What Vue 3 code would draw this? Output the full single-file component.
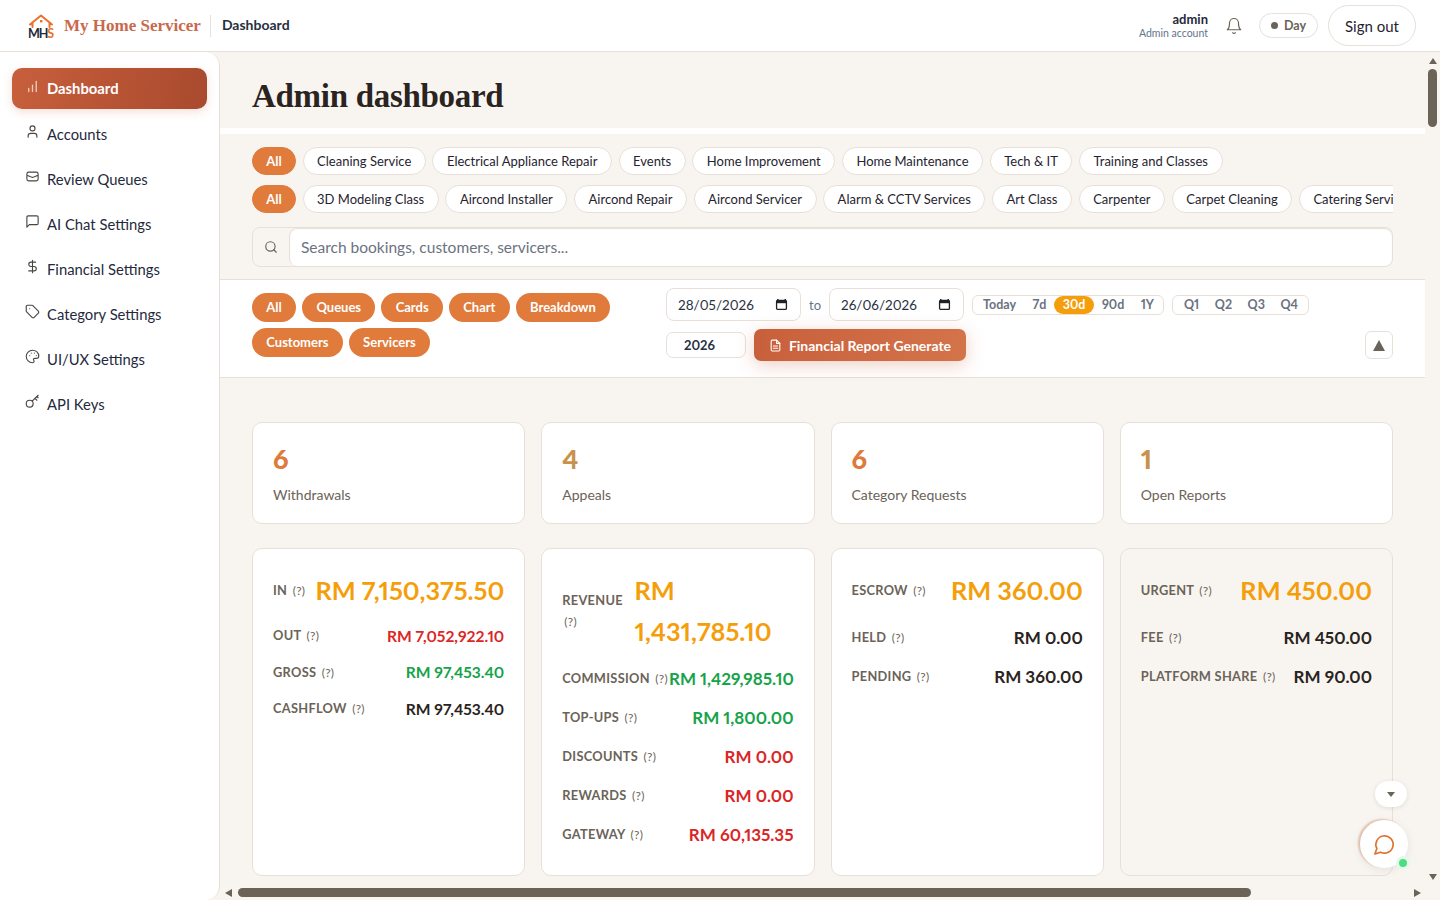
<template>
  <div class="app">
    <header class="topbar">
      <div class="brand">
        <svg class="logo" viewBox="0 0 28 28" width="28" height="28">
          <path d="M3 12.500 14 3.500 25 12.500M5.500 11v4M22.500 11v4" fill="none" stroke="#e8722c" stroke-width="2" stroke-linecap="round" stroke-linejoin="round" />
          <rect x="13" y="8" width="2.400" height="2.400" fill="#e8722c" />
          <text x="1" y="25.500" font-size="12.500" font-weight="700" font-family="Lato, sans-serif" textLength="26" fill="#1f2a3d">MH<tspan fill="#e8722c">S</tspan></text>
        </svg>
        <span class="brand-name">My Home Servicer</span>
      </div>
      <span class="crumb">Dashboard</span>
      <div class="top-right">
        <div class="who">
          <strong>admin</strong>
          <span>Admin account</span>
        </div>
        <svg class="bell" viewBox="0 0 24 24" width="18" height="18" fill="none" stroke="#6b6358" stroke-width="1.600" stroke-linecap="round" stroke-linejoin="round">
          <path d="M6 8a6 6 0 0 1 12 0c0 7 3 9 3 9H3s3-2 3-9" />
          <path d="M10.300 21a2 2 0 0 0 3.400 0" />
        </svg>
        <div class="day"><i></i>Day</div>
        <button class="signout">Sign out</button>
      </div>
    </header>

    <div class="body">
      <aside class="sidebar">
        <a v-for="item in nav" :key="item.label" :class="['nav-item', { active: item.active }]">
          <svg viewBox="0 0 24 24" width="15" height="15" fill="none" stroke="currentColor" stroke-width="1.800" stroke-linecap="round" stroke-linejoin="round">
            <path :d="item.icon" />
          </svg>
          <span>{{ item.label }}</span>
        </a>
      </aside>

      <div class="main-wrap">
        <main class="main">
          <section class="title-row">
            <h1>Admin dashboard</h1>
          </section>

          <section class="filters">
            <div class="chip-row">
              <span class="chip on">All</span>
              <span v-for="c in categories" :key="c" class="chip">{{ c }}</span>
            </div>
            <div class="chip-row">
              <span class="chip on">All</span>
              <span v-for="c in services" :key="c" class="chip">{{ c }}</span>
            </div>
            <div class="search">
              <div class="search-icon">
                <svg viewBox="0 0 24 24" width="14" height="14" fill="none" stroke="#6b6358" stroke-width="2" stroke-linecap="round">
                  <circle cx="11" cy="11" r="8" />
                  <path d="m21 21-4.300-4.300" />
                </svg>
              </div>
              <div class="search-input">Search bookings, customers, servicers...</div>
            </div>
          </section>

          <section class="toolbar">
            <div class="section-pills">
              <span v-for="p in sections" :key="p" class="pill">{{ p }}</span>
            </div>
            <div class="tools">
              <div class="tools-line">
                <div class="date">28/05/2026<svg viewBox="0 0 14 14" width="13" height="13"><path d="M3 1v2M11 1v2" stroke="#222" stroke-width="1.500" /><rect x="1.700" y="2.700" width="10.600" height="9.600" rx="1" fill="none" stroke="#222" stroke-width="1.400" /><rect x="1.700" y="3" width="10.600" height="2.600" fill="#222" /></svg></div>
                <span class="to">to</span>
                <div class="date">26/06/2026<svg viewBox="0 0 14 14" width="13" height="13"><path d="M3 1v2M11 1v2" stroke="#222" stroke-width="1.500" /><rect x="1.700" y="2.700" width="10.600" height="9.600" rx="1" fill="none" stroke="#222" stroke-width="1.400" /><rect x="1.700" y="3" width="10.600" height="2.600" fill="#222" /></svg></div>
                <div class="seg">
                  <span v-for="r in ranges" :key="r" :class="{ on: r === '30d' }">{{ r }}</span>
                </div>
                <div class="seg quarters">
                  <span v-for="q in quarters" :key="q">{{ q }}</span>
                </div>
              </div>
              <div class="tools-line second">
                <div class="year">2026</div>
                <button class="report">
                  <svg viewBox="0 0 24 24" width="13" height="13" fill="none" stroke="currentColor" stroke-width="2" stroke-linecap="round" stroke-linejoin="round">
                    <path d="M14 2H6a2 2 0 0 0-2 2v16a2 2 0 0 0 2 2h12a2 2 0 0 0 2-2V8z" />
                    <path d="M14 2v6h6M8 13h8M8 17h8" />
                  </svg>
                  Financial Report Generate
                </button>
                <button class="collapse"><i></i></button>
              </div>
            </div>
          </section>

          <section class="content">
            <div class="grid counts">
              <div v-for="c in counts" :key="c.label" class="card count">
                <b :style="{ color: c.color }">{{ c.value }}</b>
                <span>{{ c.label }}</span>
              </div>
            </div>
            <div class="grid stats">
              <div v-for="(card, i) in stats" :key="i" :class="['card', 'stat', card.kind]">
                <div v-for="(row, j) in card.rows" :key="row.label" :class="['stat-row', { lead: j === 0 }]">
                  <div class="stat-label">{{ row.label }} <small>(?)</small></div>
                  <div :class="['stat-value', row.tone]">{{ row.value }}</div>
                </div>
              </div>
            </div>
          </section>
        </main>

        <!-- headless chrome drops real scrollbars, so these are drawn over the pane -->
        <div class="bar-v">
          <i class="arrow up"></i>
          <b class="thumb-v"></b>
          <i class="arrow down"></i>
        </div>
        <div class="bar-h">
          <i class="arrow left"></i>
          <b class="thumb-h"></b>
          <i class="arrow right"></i>
        </div>
      </div>
    </div>

    <button class="float-down"><i></i></button>
    <button class="chat">
      <svg viewBox="0 0 24 24" width="23" height="23" fill="none" stroke="#e0702c" stroke-width="1.700" stroke-linejoin="round">
        <path d="M7.900 20A9 9 0 1 0 4 16.100L2 22z" />
      </svg>
      <em></em>
    </button>
  </div>
</template>

<script setup>
const nav = [
  { label: 'Dashboard', active: true, icon: 'M6 20v-5M12 20V10M18 20V4' },
  { label: 'Accounts', icon: 'M19 21v-2a4 4 0 0 0-4-4H9a4 4 0 0 0-4 4v2M12 11a4 4 0 1 0 0-8 4 4 0 0 0 0 8z' },
  { label: 'Review Queues', icon: 'M3 12V8a3 3 0 0 1 3-3h12a3 3 0 0 1 3 3v8a3 3 0 0 1-3 3H6a3 3 0 0 1-3-3zM3 10l6 2.500 3 1 3-1 6-2.500' },
  { label: 'AI Chat Settings', icon: 'M21 15a2 2 0 0 1-2 2H7l-4 4V5a2 2 0 0 1 2-2h14a2 2 0 0 1 2 2z' },
  { label: 'Financial Settings', icon: 'M12 2v20M17 5H9.500a3.500 3.500 0 0 0 0 7h5a3.500 3.500 0 0 1 0 7H6' },
  { label: 'Category Settings', icon: 'M12.600 2.600A2 2 0 0 0 11.200 2H4a2 2 0 0 0-2 2v7.200a2 2 0 0 0 .6 1.400l8.700 8.700a2.400 2.400 0 0 0 3.400 0l6.600-6.600a2.400 2.400 0 0 0 0-3.400zM7.500 7.500h.01' },
  { label: 'UI/UX Settings', icon: 'M12 2a10 10 0 1 0 0 20c1.500 0 2.500-1 2.500-2.300 0-1.500-1-1.700-1-3 0-1 .8-1.700 2-1.700h2.500c2.200 0 4-1.500 4-4C22 5.800 17.500 2 12 2zM7.500 10.500h.01M10 6.500h.01M15 6.500h.01M18 10.500h.01' },
  { label: 'API Keys', icon: 'M7.500 21a5.500 5.500 0 1 0 0-11 5.500 5.500 0 0 0 0 11zM11.500 11.500 21 2M16 7l3 3M19 4l2 2' }
]

const categories = ['Cleaning Service', 'Electrical Appliance Repair', 'Events', 'Home Improvement', 'Home Maintenance', 'Tech & IT', 'Training and Classes']
const services = ['3D Modeling Class', 'Aircond Installer', 'Aircond Repair', 'Aircond Servicer', 'Alarm & CCTV Services', 'Art Class', 'Carpenter', 'Carpet Cleaning', 'Catering Services']
const sections = ['All', 'Queues', 'Cards', 'Chart', 'Breakdown', 'Customers', 'Servicers']
const ranges = ['Today', '7d', '30d', '90d', '1Y']
const quarters = ['Q1', 'Q2', 'Q3', 'Q4']

const counts = [
  { value: 6, label: 'Withdrawals', color: '#dd7a3c' },
  { value: 4, label: 'Appeals', color: '#c9924a' },
  { value: 6, label: 'Category Requests', color: '#dd7a3c' },
  { value: 1, label: 'Open Reports', color: '#c9924a' }
]

const stats = [
  {
    kind: 'compact',
    rows: [
      { label: 'IN', value: 'RM 7,150,375.50', tone: 'orange' },
      { label: 'OUT', value: 'RM 7,052,922.10', tone: 'red' },
      { label: 'GROSS', value: 'RM 97,453.40', tone: 'green' },
      { label: 'CASHFLOW', value: 'RM 97,453.40' }
    ]
  },
  {
    kind: '',
    rows: [
      { label: 'REVENUE', value: 'RM 1,431,785.10', tone: 'orange' },
      { label: 'COMMISSION', value: 'RM 1,429,985.10', tone: 'green' },
      { label: 'TOP-UPS', value: 'RM 1,800.00', tone: 'green' },
      { label: 'DISCOUNTS', value: 'RM 0.00', tone: 'red' },
      { label: 'REWARDS', value: 'RM 0.00', tone: 'red' },
      { label: 'GATEWAY', value: 'RM 60,135.35', tone: 'red' }
    ]
  },
  {
    kind: '',
    rows: [
      { label: 'ESCROW', value: 'RM 360.00', tone: 'orange' },
      { label: 'HELD', value: 'RM 0.00' },
      { label: 'PENDING', value: 'RM 360.00' }
    ]
  },
  {
    kind: 'tinted',
    rows: [
      { label: 'URGENT', value: 'RM 450.00', tone: 'orange' },
      { label: 'FEE', value: 'RM 450.00' },
      { label: 'PLATFORM SHARE', value: 'RM 90.00' }
    ]
  }
]
</script>

<style>
html, body {
  margin: 0;
  height: 100%;
  overflow: hidden;
}
</style>

<style scoped>
.app {
  height: 100vh;
  display: flex;
  flex-direction: column;
  background: #f8f5f1;
  color: #1f2430;
  font-family: Lato, "Noto Sans", sans-serif;
  font-variant-numeric: proportional-nums;
}

.topbar {
  height: 51px;
  flex-shrink: 0;
  display: flex;
  align-items: center;
  padding: 0 24px 0 27px;
  background: #fff;
  border-bottom: 1px solid #e8e0d8;
}

.brand {
  display: flex;
  align-items: center;
  gap: 9px;
  height: 22px;
  padding-right: 9px;
  border-right: 1px solid #e8e0d8;
}

.brand-name {
  font-family: "Liberation Serif", serif;
  font-weight: 700;
  font-size: 17px;
  color: #c9694c;
}

.crumb {
  margin: -2px 0 0 11px;
  font-size: 14px;
  font-weight: 700;
  color: #26303f;
}

.top-right {
  margin-left: auto;
  display: flex;
  align-items: center;
}

.who {
  display: flex;
  flex-direction: column;
  align-items: flex-end;
  line-height: 14px;
}

.who strong {
  font-size: 13px;
  color: #1f2a3d;
}

.who span {
  font-size: 10.500px;
  color: #64748b;
}

.bell {
  margin-left: 17px;
}

.day {
  margin-left: 16px;
  width: 59px;
  height: 25px;
  box-sizing: border-box;
  display: flex;
  align-items: center;
  justify-content: center;
  gap: 6px;
  border: 1px solid #e8e0d8;
  border-radius: 13px;
  font-size: 12.500px;
  font-weight: 700;
  color: #6b6358;
}

.day i {
  width: 7px;
  height: 7px;
  border-radius: 50%;
  background: #6b6358;
}

.signout {
  margin-left: 10px;
  width: 88px;
  height: 41px;
  background: #fff;
  border: 1px solid #e8e0d8;
  border-radius: 21px;
  font: inherit;
  font-size: 15px;
  color: #1f2430;
}

.body {
  flex: 1;
  min-height: 0;
  display: flex;
}

.sidebar {
  width: 220px;
  flex-shrink: 0;
  box-sizing: border-box;
  padding: 16px 12px;
  display: flex;
  flex-direction: column;
  gap: 4px;
  background: #fff;
  border-right: 1px solid #e8e0d8;
  border-radius: 0 14px 14px 0;
}

.nav-item {
  height: 41px;
  display: flex;
  align-items: center;
  gap: 7px;
  padding-left: 13px;
  border-radius: 10px;
  font-size: 14.800px;
  color: #1f2a3d;
}

.nav-item svg {
  margin-top: -4px;
  color: #4a4640;
}

.nav-item.active {
  background: linear-gradient(100deg, #c75f3c, #a94a2e);
  color: #fff;
  font-weight: 700;
  box-shadow: 0 3px 10px rgba(199, 95, 60, 0.2);
}

.nav-item.active span {
  margin-top: -2px;
}

.nav-item.active svg {
  color: #f3c8b6;
  stroke-width: 2.200;
}

.main-wrap {
  flex: 1;
  min-width: 0;
  position: relative;
}

.main {
  height: 100%;
  margin-right: 15px;
  overflow: hidden;
}

.bar-v {
  position: absolute;
  top: 0;
  right: 0;
  bottom: 15px;
  width: 15px;
  display: flex;
  flex-direction: column;
  align-items: center;
  padding-top: 6px;
  box-sizing: border-box;
}

.thumb-v {
  width: 9px;
  height: 58px;
  margin-top: 5px;
  background: #6b6358;
  border-radius: 5px;
}

.bar-h {
  position: absolute;
  left: 0;
  right: 0;
  bottom: 0;
  height: 15px;
  display: flex;
  align-items: center;
  padding-left: 5px;
  box-sizing: border-box;
}

.thumb-h {
  width: 1013px;
  height: 9px;
  margin-left: 6px;
  background: #6b6358;
  border-radius: 5px;
}

.arrow {
  width: 0;
  height: 0;
  display: block;
}

.arrow.up {
  border-left: 4.500px solid transparent;
  border-right: 4.500px solid transparent;
  border-bottom: 6px solid #6b6358;
}

.arrow.down {
  margin-top: auto;
  margin-bottom: 5px;
  border-left: 4.500px solid transparent;
  border-right: 4.500px solid transparent;
  border-top: 6px solid #6b6358;
}

.arrow.left {
  border-top: 4.500px solid transparent;
  border-bottom: 4.500px solid transparent;
  border-right: 7px solid #6b6358;
}

.arrow.right {
  margin-left: auto;
  margin-right: 19px;
  border-top: 4.500px solid transparent;
  border-bottom: 4.500px solid transparent;
  border-left: 7px solid #6b6358;
}

.title-row {
  height: 76px;
  padding-left: 32px;
  display: flex;
  align-items: center;
  box-sizing: border-box;
}

h1 {
  margin: 12px 0 0;
  font-family: "Liberation Serif", serif;
  font-size: 33px;
  letter-spacing: -0.3px;
  font-weight: 700;
  color: #2a2320;
}

.filters {
  border-top: 6px solid #fff;
  border-bottom: 1px solid #e8e0d8;
  padding: 13px 32px 12px;
}

.chip-row {
  display: flex;
  gap: 6.500px;
  height: 28px;
  margin-bottom: 10px;
  overflow: hidden;
}

.chip {
  flex-shrink: 0;
  display: flex;
  align-items: center;
  padding: 0 13.600px;
  background: #fff;
  border: 1px solid #e8e0d8;
  border-radius: 14px;
  font-size: 13px;
  white-space: nowrap;
}

.chip.on {
  width: 44px;
  box-sizing: border-box;
  justify-content: center;
  padding: 0;
  background: #e07b3c;
  border-color: #e07b3c;
  color: #fff;
  font-weight: 700;
}

.search {
  display: flex;
  height: 40px;
  margin-top: 14px;
  border: 1px solid #e8e0d8;
  border-radius: 8px;
  box-sizing: border-box;
}

.search-icon {
  width: 36px;
  flex-shrink: 0;
  display: flex;
  align-items: center;
  justify-content: center;
}

.search-input {
  flex: 1;
  display: flex;
  align-items: center;
  padding-left: 11px;
  background: #fff;
  border-left: 1px solid #e8e0d8;
  border-radius: 8px;
  box-shadow: inset 0 1px 1px #e8e0d8;
  font-size: 15.500px;
  color: #6b7280;
}

.toolbar {
  display: flex;
  height: 98px;
  box-sizing: border-box;
  padding: 8px 32px 0;
  background: #fff;
  border-bottom: 1px solid #e8e0d8;
}

.section-pills {
  width: 390px;
  margin-right: 24px;
  padding-top: 5px;
  display: flex;
  flex-wrap: wrap;
  align-content: flex-start;
  gap: 6px;
}

.pill {
  height: 29px;
  box-sizing: border-box;
  padding: 0 14.300px 1px;
  display: flex;
  align-items: center;
  background: #e07b3c;
  border-radius: 15px;
  color: #fff;
  font-size: 13px;
  font-weight: 700;
}

.tools {
  flex: 1;
  min-width: 0;
}

.tools-line {
  display: flex;
  align-items: center;
}

.date {
  width: 135px;
  height: 33px;
  box-sizing: border-box;
  display: flex;
  align-items: center;
  justify-content: space-between;
  padding: 0 12px 0 11px;
  border: 1px solid #e8e0d8;
  border-radius: 8px;
  font-size: 13.500px;
  color: #2a3040;
}

.to {
  width: 28px;
  text-align: center;
  font-size: 13px;
  color: #64748b;
}

.seg {
  margin-left: 8px;
  width: 192px;
  height: 20px;
  box-sizing: border-box;
  display: flex;
  align-items: center;
  justify-content: space-between;
  padding: 0 9px 0 10px;
  border: 1px solid #e8e0d8;
  border-radius: 6px;
  font-size: 12.500px;
  font-weight: 700;
  color: #6b7280;
}

.seg span {
  padding: 0 9px;
  margin: 0 -9px;
  line-height: 18px;
  border-radius: 9px;
}

.seg span.on {
  background: #f59e0b;
  color: #fff;
}

.seg.quarters {
  width: 137px;
  padding: 0 10px 0 11px;
}

.tools-line.second {
  margin-top: 8px;
}

.year {
  width: 80px;
  height: 26px;
  box-sizing: border-box;
  display: flex;
  align-items: center;
  padding-left: 17px;
  border: 1px solid #e8e0d8;
  border-radius: 7px;
  font-size: 13px;
  font-weight: 700;
  color: #26303f;
}

.report {
  margin-left: 8px;
  width: 212px;
  height: 32px;
  display: flex;
  align-items: center;
  justify-content: center;
  gap: 7px;
  background: linear-gradient(100deg, #c85f3c, #d4744a);
  border: 0;
  border-radius: 7px;
  color: #fff;
  font: inherit;
  font-size: 14px;
  font-weight: 700;
  box-shadow: 0 4px 18px rgba(200, 95, 60, 0.3);
}

.collapse {
  margin-left: auto;
  width: 28px;
  height: 28px;
  display: flex;
  align-items: center;
  justify-content: center;
  background: #fff;
  border: 1px solid #e8e0d8;
  border-radius: 6px;
}

.collapse i {
  border-left: 6px solid transparent;
  border-right: 6px solid transparent;
  border-bottom: 11px solid #6b6358;
}

.content {
  padding: 44px 32px 0;
}

.grid {
  display: grid;
  grid-template-columns: repeat(4, minmax(0, 1fr));
  gap: 16px;
}

.card {
  box-sizing: border-box;
  background: #fff;
  border: 1px solid #e8e0d8;
  border-radius: 10px;
}

.count {
  height: 102px;
  padding: 17px 20px;
  display: flex;
  flex-direction: column;
}

.count b {
  font-size: 27px;
  font-weight: 900;
  line-height: 37px;
}

.count span {
  margin-top: 9px;
  font-size: 14px;
  color: #6b6358;
}

.stats {
  margin-top: 24px;
  height: 328px;
}

.stat {
  padding: 21px 20px 20px;
  display: flex;
  flex-direction: column;
  gap: 13.500px;
}

.stat.compact {
  gap: 12.500px;
}

.stat.tinted {
  background: #f8f5f1;
}

.stat-row {
  display: flex;
  align-items: center;
  justify-content: space-between;
  gap: 1px;
}

.stat-row.lead {
  gap: 10px;
}

.stat-label {
  font-size: 12.800px;
  line-height: 21px;
  font-weight: 700;
  letter-spacing: 0.3px;
  color: #6b6358;
  white-space: nowrap;
}

.lead .stat-label {
  white-space: normal;
}

.stat-label small {
  margin-left: 2px;
  font-size: 12px;
  font-weight: 400;
}

.stat-value {
  flex-shrink: 0;
  font-size: 17px;
  line-height: 25.500px;
  font-weight: 700;
  color: #2a2320;
  white-space: nowrap;
}

.compact .stat-value {
  font-size: 15.600px;
  line-height: 24px;
}

.lead .stat-value,
.compact .lead .stat-value {
  max-width: 159px;
  font-size: 25.300px;
  line-height: 41px;
  white-space: normal;
}

.compact .lead .stat-value,
.compact .lead .stat-label {
  max-width: none;
  white-space: nowrap;
}

.orange {
  color: #f59e0b;
}

.red {
  color: #dc2626;
}

.green {
  color: #16a34a;
}

.float-down {
  position: fixed;
  left: 1375px;
  top: 781px;
  width: 32px;
  height: 26px;
  display: flex;
  align-items: center;
  justify-content: center;
  background: #fff;
  border: 0;
  border-radius: 13px;
  box-shadow: 0 1px 5px rgba(0, 0, 0, 0.1);
}

.float-down i {
  border-left: 4px solid transparent;
  border-right: 4px solid transparent;
  border-top: 5px solid #6b6358;
}

.chat {
  position: fixed;
  left: 1360px;
  top: 820px;
  width: 48px;
  height: 48px;
  display: flex;
  align-items: center;
  justify-content: center;
  background: #fff;
  border: 0;
  border-radius: 50%;
  box-shadow: -2px -1px 2px rgba(200, 130, 90, 0.45), 0 2px 10px rgba(0, 0, 0, 0.08);
}

.chat em {
  position: absolute;
  right: -2px;
  bottom: -2px;
  width: 8px;
  height: 8px;
  background: #4ade80;
  border: 3px solid #e6f7ec;
  border-radius: 50%;
}
</style>
